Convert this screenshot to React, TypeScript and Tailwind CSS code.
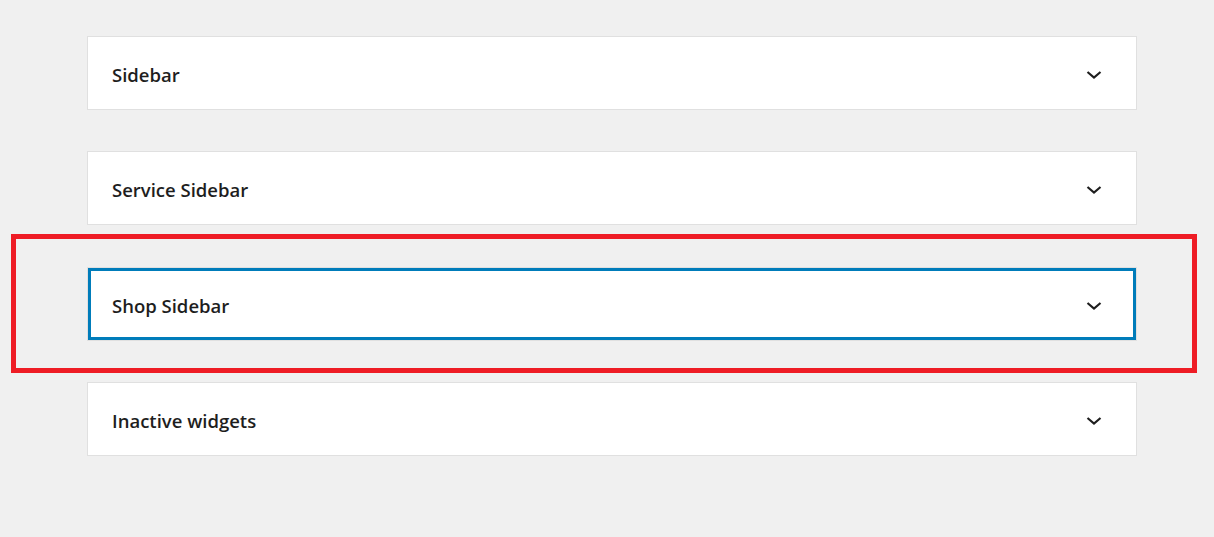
const areas = ["Sidebar", "Service Sidebar", "Shop Sidebar", "Inactive widgets"];

function Chevron() {
  return (
    <svg width="16" height="10" viewBox="0 0 16 10" fill="none" className="shrink-0">
      <path d="M1.5 2L8 7.5L14.5 2" stroke="#1e1e1e" strokeWidth="2.2" />
    </svg>
  );
}

function WidgetArea({ title, focused }: { title: string; focused?: boolean }) {
  return (
    <div
      className={
        "flex h-[74px] w-[1050px] items-center justify-between border border-[#e0e0e0] bg-white pl-6 pr-[34px] pt-1 " +
        (focused ? "shadow-[inset_0_0_0_3px_#007cba]" : "")
      }
    >
      <span className="text-[18.5px] font-semibold text-[#1e1e1e]">{title}</span>
      <Chevron />
    </div>
  );
}

export default function App() {
  return (
    <div
      className="relative h-[537px] w-[1214px] overflow-hidden bg-[#f0f0f0] pl-[87px] pt-[36px]"
      style={{ fontFamily: '"Open Sans", "Noto Sans", sans-serif' }}
    >
      <div className="flex flex-col">
        <WidgetArea title={areas[0]} />
        <div className="mt-[41px]">
          <WidgetArea title={areas[1]} />
        </div>
        <div className="mt-[42px]">
          <WidgetArea title={areas[2]} focused />
        </div>
        <div className="mt-[41px]">
          <WidgetArea title={areas[3]} />
        </div>
      </div>
      {/* annotation highlight */}
      <div className="pointer-events-none absolute left-[11px] top-[234px] h-[139px] w-[1186px] border-[5px] border-[#ee1c25]" />
    </div>
  );
}
